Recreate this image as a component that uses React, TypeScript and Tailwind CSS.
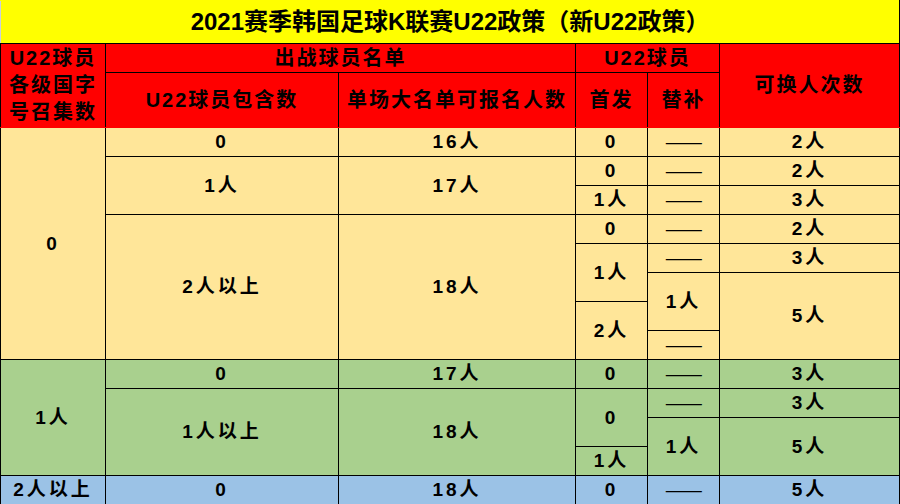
const Y = "bg-[#ffe699]";
const G = "bg-[#a9d08e]";
const B = "bg-[#9bc2e6]";
const DASH = (
  <span className="inline-block scale-x-[1.2] font-['Noto_Sans_CJK_SC',sans-serif] font-normal text-[19px] tracking-normal">
    ——
  </span>
);

function C({
  children,
  rs,
  bg,
}: {
  children: React.ReactNode;
  rs?: number;
  bg: string;
}) {
  return (
    <td
      rowSpan={rs}
      className={`${bg} border border-black p-0 text-center align-middle text-[19px] leading-[20px] tracking-[3px] font-bold whitespace-nowrap`}
    >
      {children}
    </td>
  );
}

function H({
  children,
  rs,
  cs,
  last,
}: {
  children: React.ReactNode;
  rs?: number;
  cs?: number;
  last?: boolean;
}) {
  return (
    <th
      rowSpan={rs}
      colSpan={cs}
      className={`bg-[#ff0000] border border-black ${last ? "border-b-[#ff0000]" : ""} p-0 text-center align-middle text-[20px] leading-[27px] tracking-[2px] font-bold whitespace-nowrap`}
    >
      {children}
    </th>
  );
}

export default function App() {
  return (
    <div className="w-[900px] h-[504px] overflow-hidden bg-white text-black font-['Liberation_Sans','Noto_Sans_CJK_SC',sans-serif]">
      <table className="w-[899px] table-fixed border-collapse">
        <colgroup>
          <col className="w-[105px]" />
          <col className="w-[233px]" />
          <col className="w-[237px]" />
          <col className="w-[72px]" />
          <col className="w-[72px]" />
          <col className="w-[180px]" />
        </colgroup>
        <thead>
          <tr className="h-[43px]">
            <th
              colSpan={6}
              className="bg-[#ffff00] border border-black border-l-[#c9cfdc] border-t-[#ffff00] p-0 text-center text-[24px] font-bold"
            >
              2021赛季韩国足球K联赛U22政策（新U22政策）
            </th>
          </tr>
          <tr className="h-[29px]">
            <H rs={2} last>
              U22球员
              <br />
              各级国字
              <br />
              号召集数
            </H>
            <H cs={2}>出战球员名单</H>
            <H cs={2}>U22球员</H>
            <H rs={2} last>
              可换人次数
            </H>
          </tr>
          <tr className="h-[55px]">
            <H last>U22球员包含数</H>
            <H last>单场大名单可报名人数</H>
            <H last>首发</H>
            <H last>替补</H>
          </tr>
        </thead>
        <tbody>
          <tr className="h-[29px]">
            <C bg={Y} rs={8}>0</C>
            <C bg={Y}>0</C>
            <C bg={Y}>16人</C>
            <C bg={Y}>0</C>
            <C bg={Y}>{DASH}</C>
            <C bg={Y}>2人</C>
          </tr>
          <tr className="h-[29px]">
            <C bg={Y} rs={2}>1人</C>
            <C bg={Y} rs={2}>17人</C>
            <C bg={Y}>0</C>
            <C bg={Y}>{DASH}</C>
            <C bg={Y}>2人</C>
          </tr>
          <tr className="h-[29px]">
            <C bg={Y}>1人</C>
            <C bg={Y}>{DASH}</C>
            <C bg={Y}>3人</C>
          </tr>
          <tr className="h-[29px]">
            <C bg={Y} rs={5}>2人以上</C>
            <C bg={Y} rs={5}>18人</C>
            <C bg={Y}>0</C>
            <C bg={Y}>{DASH}</C>
            <C bg={Y}>2人</C>
          </tr>
          <tr className="h-[29px]">
            <C bg={Y} rs={2}>1人</C>
            <C bg={Y}>{DASH}</C>
            <C bg={Y}>3人</C>
          </tr>
          <tr className="h-[29px]">
            <C bg={Y} rs={2}>1人</C>
            <C bg={Y} rs={3}>5人</C>
          </tr>
          <tr className="h-[29px]">
            <C bg={Y} rs={2}>2人</C>
          </tr>
          <tr className="h-[29px]">
            <C bg={Y}>{DASH}</C>
          </tr>
          <tr className="h-[29px]">
            <C bg={G} rs={4}>1人</C>
            <C bg={G}>0</C>
            <C bg={G}>17人</C>
            <C bg={G}>0</C>
            <C bg={G}>{DASH}</C>
            <C bg={G}>3人</C>
          </tr>
          <tr className="h-[29px]">
            <C bg={G} rs={3}>1人以上</C>
            <C bg={G} rs={3}>18人</C>
            <C bg={G} rs={2}>0</C>
            <C bg={G}>{DASH}</C>
            <C bg={G}>3人</C>
          </tr>
          <tr className="h-[29px]">
            <C bg={G} rs={2}>1人</C>
            <C bg={G} rs={2}>5人</C>
          </tr>
          <tr className="h-[29px]">
            <C bg={G}>1人</C>
          </tr>
          <tr className="h-[29px]">
            <C bg={B}>2人以上</C>
            <C bg={B}>0</C>
            <C bg={B}>18人</C>
            <C bg={B}>0</C>
            <C bg={B}>{DASH}</C>
            <C bg={B}>5人</C>
          </tr>
        </tbody>
      </table>
    </div>
  );
}
